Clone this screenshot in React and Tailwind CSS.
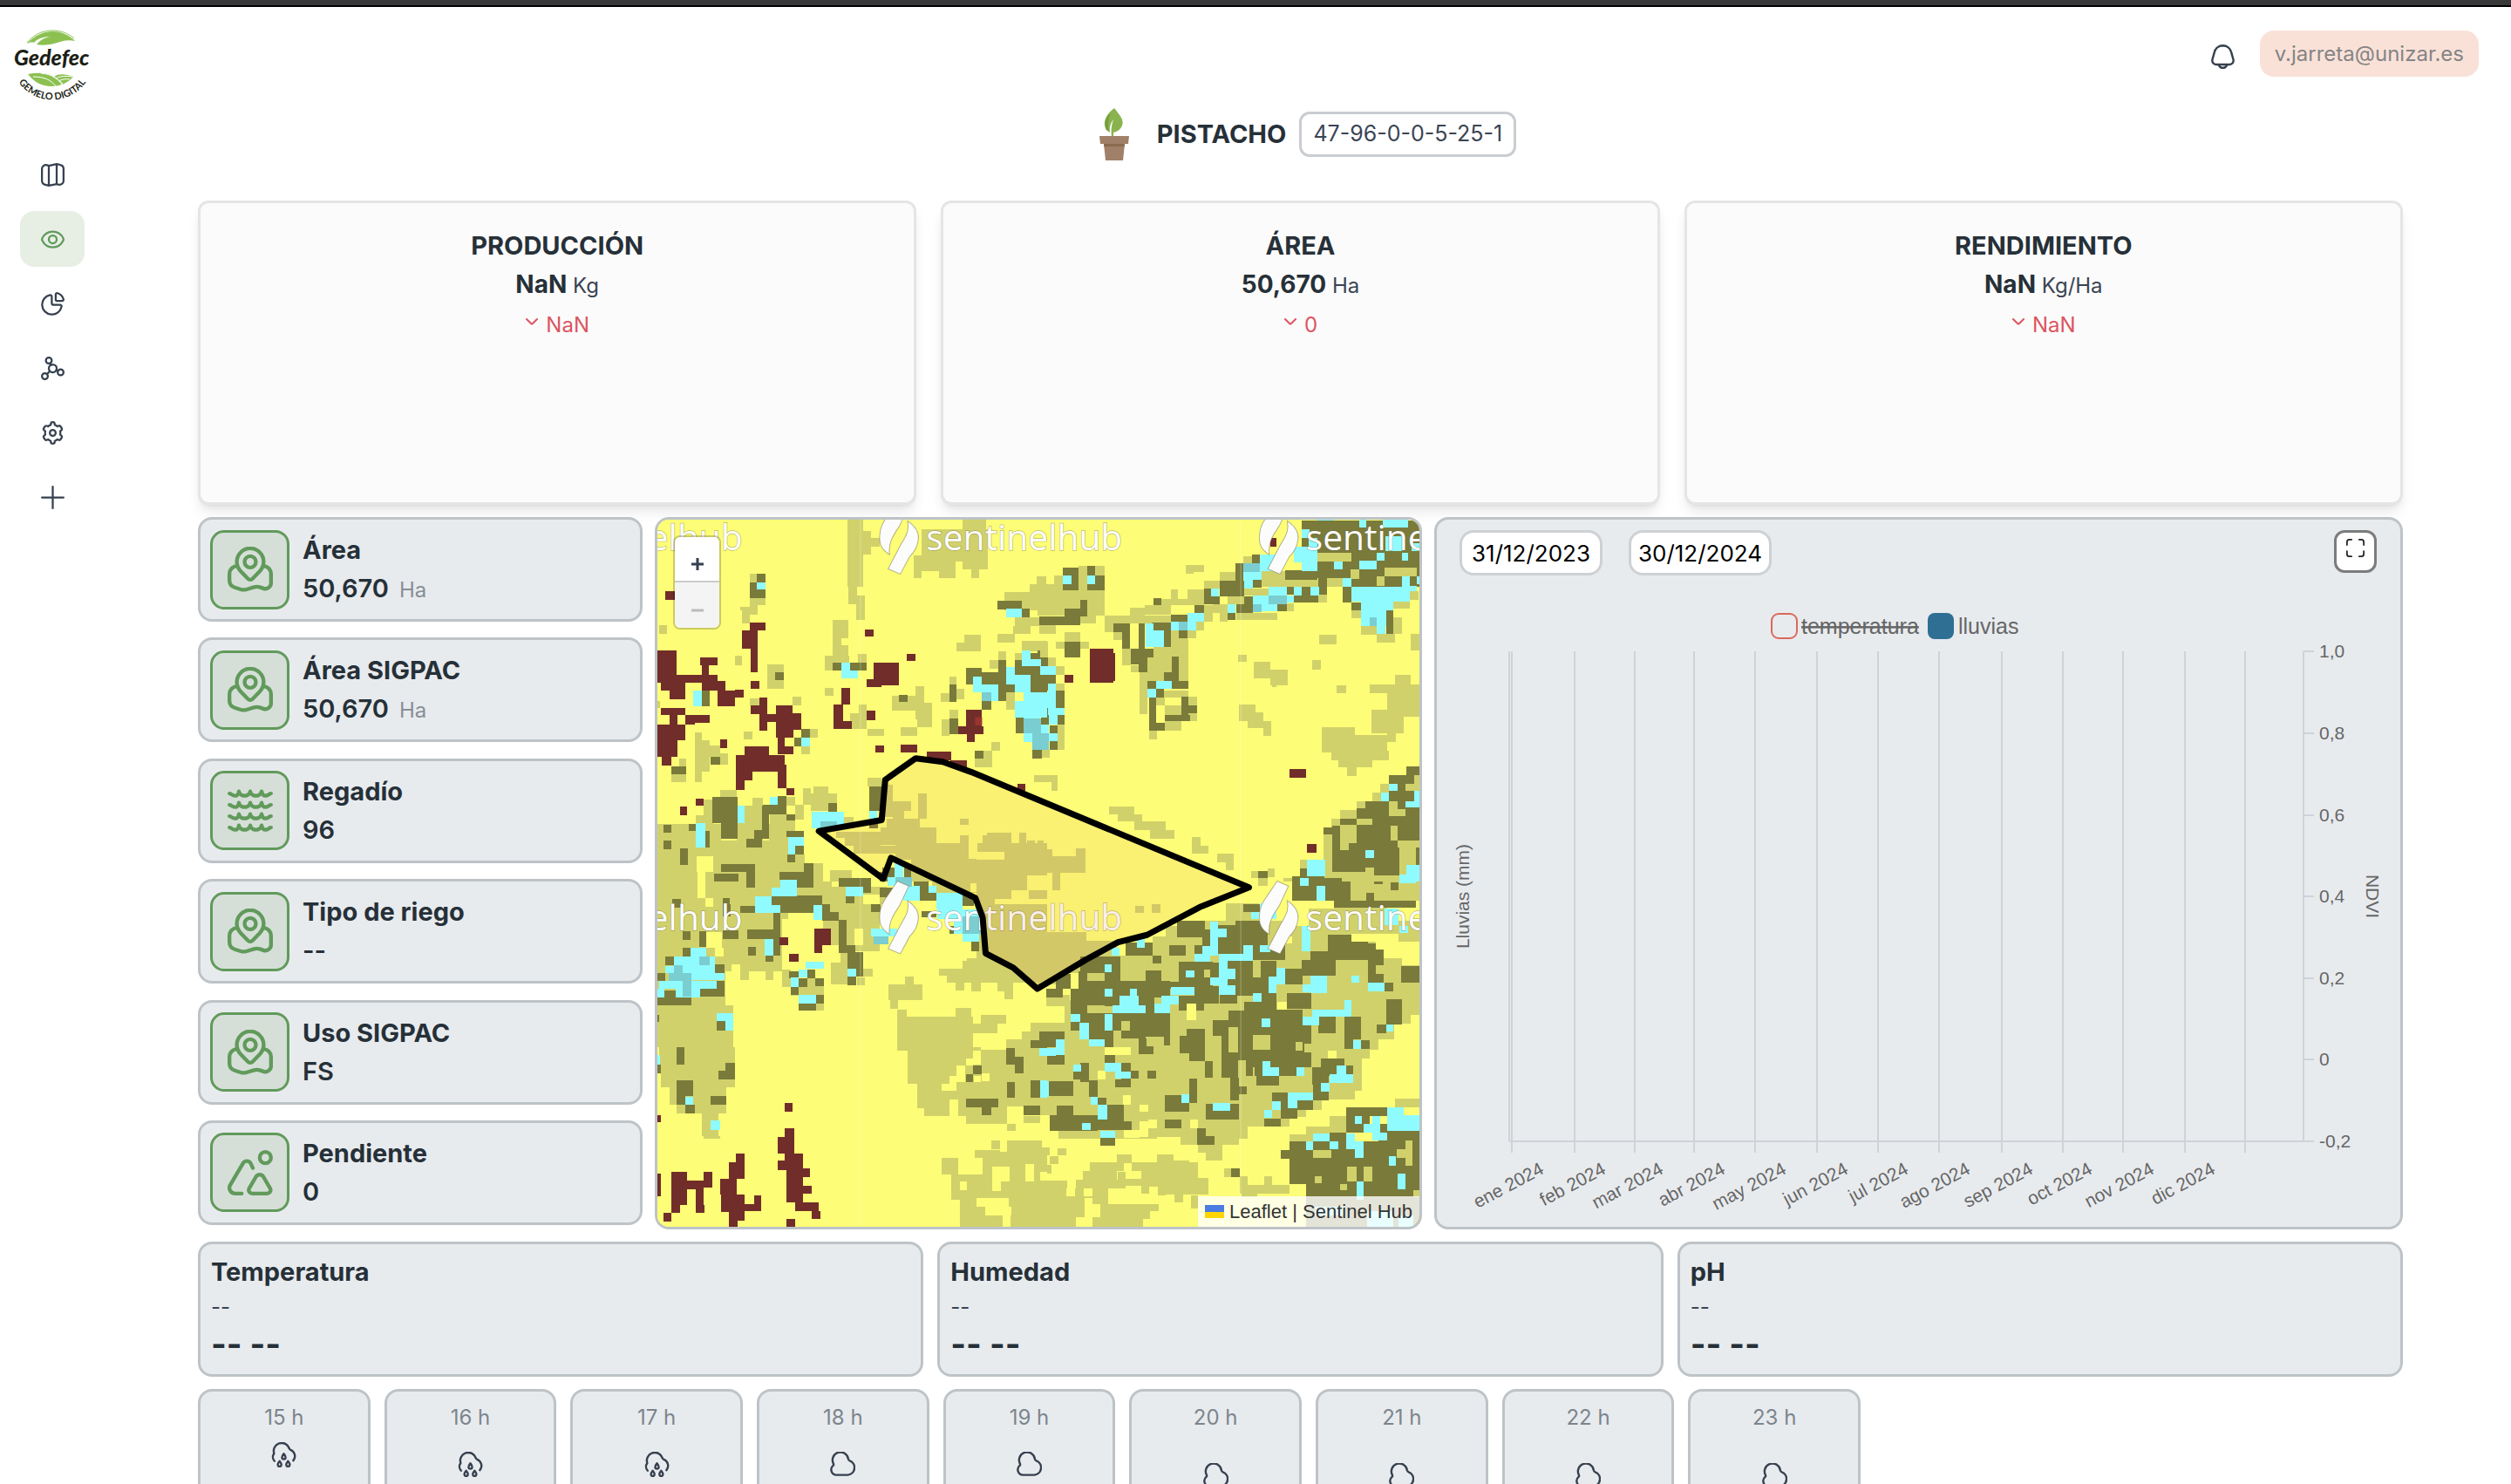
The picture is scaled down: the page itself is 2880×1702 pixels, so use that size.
import React from "react";

/* ---------- land cover raster: "x1,y1,x2,y2" blocks per quadrant ---------- */

const QUADRANTS = [
  {
    dx: 0,
    dy: 0,
    light: `665,18,718,250 718,57,747,138 747,80,775,110 668,250,697,308 695,280,725,362 330,204,354,235 330,288,384,312 330,312,358,345 297,318,330,330 303,330,330,374
18,382,46,410 278,486,302,518 389,514,446,600 614,363,668,425 614,425,644,510 644,450,668,510 586,484,672,508 586,484,614,537 702,478,732,508 586,595,617,624
894,140,1037,195 980,195,1037,219 894,195,920,219 920,52,1148,163 1060,18,1142,52 1062,163,1148,188 1092,188,1119,219
1317,213,1347,240 1293,240,1350,267 1206,267,1350,330 1240,355,1350,384 1236,384,1295,410 1180,412,1242,441 1068,414,1125,470 1041,441,1068,470 1265,435,1350,470 1320,470,1350,495
1185,470,1212,500 1155,500,1185,530 1240,475,1265,530 1017,558,1041,590 987,615,1017,644 1041,600,1068,634
819,622,930,675 900,590,930,705 905,675,957,732 930,648,957,705 478,625,506,657 330,632,362,657 674,682,732,738 705,652,732,682 735,738,792,762 849,732,905,762
1017,672,1047,700 990,704,1017,760 1212,610,1242,670 140,748,165,920 165,776,192,885 192,795,228,832 228,820,256,860 308,745,338,774 12,640,22,665 60,890,112,920 88,838,112,865 506,798,537,824 537,738,563,768
1160,783,1190,812 1104,840,1162,868 1134,812,1162,840 1307,897,1350,920 512,942,540,998 548,936,598,970 540,960,628,1020 735,906,783,936
228,948,285,975 12,1065,230,1260 230,1120,460,1260 460,1168,517,1260 145,1035,205,1065 170,980,200,1065 285,1000,340,1120 340,975,375,1120 400,1030,485,1260 455,970,485,1000 485,998,515,1050 395,1065,460,1200
548,1200,580,1260 605,1224,680,1260 652,1040,687,1080
785,930,822,1040 822,987,885,1020 822,1015,860,1045 908,960,937,1045 800,1045,915,1075 780,1075,972,1135 625,1090,780,1112 655,1110,780,1140 685,1140,830,1165 830,1130,1082,1188 885,1185,1110,1260 1052,1102,1082,1160 1052,1045,1082,1068 1082,1186,1350,1260 1112,1130,1350,1160 1130,1102,1200,1130 1145,1095,1230,1130 1255,1095,1280,1130 1282,1120,1310,1160 1205,1160,1350,1188`,
    dark: `354,204,384,235 330,235,358,288 358,258,384,288 1180,298,1265,328 1265,325,1293,353 1180,320,1212,328 1323,353,1350,382
418,543,446,570 165,606,192,660 614,508,644,536 674,508,732,536 843,620,873,645 1074,528,1128,558 1074,558,1098,585 1128,543,1212,585 1185,500,1212,640 1242,500,1265,552 1265,520,1350,552 1295,475,1323,498 1265,500,1330,525 1212,585,1242,610 1295,552,1350,610 1323,610,1350,640 1330,665,1350,722 1128,640,1160,672 1017,585,1041,644 1017,702,1047,756 1245,697,1272,752 1104,812,1134,840 1302,810,1332,840
506,738,537,768 483,768,506,798 195,832,228,860 60,865,112,892 740,936,795,1020 740,1065,770,1078 200,972,287,1060 230,1060,287,1115 375,998,455,1030 425,968,455,1030 372,1000,397,1115 345,1085,397,1115 318,1115,372,1145 33,1067,60,1095 120,1065,143,1088 33,1122,60,1150 90,1148,118,1205 175,1088,192,1145 455,1088,515,1110 485,1140,515,1168 460,1168,485,1197 455,1030,485,1052 600,993,628,1022 230,1203,347,1230 206,1235,292,1260 318,1203,347,1260 515,1198,548,1230 490,1228,548,1260 433,1228,520,1254 635,1248,690,1260 785,1215,830,1250 860,1215,885,1250`,
    cyan: `354,235,384,258 1212,325,1265,353 134,606,165,660 644,508,674,563 674,536,702,563 506,768,537,798 398,972,425,998 287,1002,311,1060 143,1060,176,1145 462,1110,515,1140 462,1140,485,1170 543,1022,652,1078 740,1018,768,1045 828,1195,858,1250 803,1245,830,1260 435,1254,490,1260
1265,468,1295,520 1295,498,1330,520 1330,525,1350,552 1212,525,1242,585 1242,552,1295,610 1098,558,1128,612 1128,585,1185,640 1272,610,1323,700 1242,640,1350,697 1323,640,1350,665 1272,752,1302,782 1330,722,1350,755`,
    teal: `1128,612,1160,640 1272,700,1330,752 1302,752,1350,810 572,1055,628,1078 830,1245,885,1260`,
    maroon: `40,264,72,293 330,372,384,398 302,398,358,462 333,462,358,543 333,573,362,600 12,468,77,578 24,578,108,606 54,606,108,635 77,550,165,578 158,492,220,518 165,518,190,550 165,550,220,606 220,573,245,606 220,606,280,660 280,602,308,630
24,665,108,690 54,690,82,722 108,690,193,717 108,700,140,722 12,722,108,776 12,776,82,833 26,833,60,862 228,774,252,803 362,630,390,743 333,657,362,685 390,685,420,712 420,657,476,752 476,682,506,740 420,740,480,768 425,752,450,824 450,798,480,824 311,798,395,830 281,828,450,885 281,885,338,914 281,914,311,946 425,860,455,942 455,942,482,966
143,978,170,1002 90,1005,114,1035 725,396,755,420 755,508,843,588 732,565,783,593 870,478,900,502 644,595,674,653 617,652,650,738 650,710,680,738 732,675,761,707 761,795,792,818 849,790,905,819 937,814,1023,845 1020,845,1077,870 1074,672,1128,756 1047,727,1134,756 1077,756,1104,783 1251,925,1277,950`,
    lightOver: ``,
    yellowOver: `148,1176,205,1230 150,1230,178,1260`,
  },
  {
    dx: 1320,
    dy: 0,
    light: `0,213,24,240 24,240,228,348 54,210,84,240 140,178,170,295 195,178,228,348 0,240,24,348 3,382,60,410 60,436,90,460 90,405,144,436 144,436,176,462 0,436,33,492 33,492,62,520 62,522,90,550 62,580,92,606 145,345,200,375
508,174,570,198 508,174,535,203 456,258,482,290 425,290,570,312 513,258,570,290 367,312,456,345 315,320,367,375 230,348,460,375 230,370,258,404 258,404,290,430 288,462,318,518 318,518,348,543 348,543,375,686 375,487,461,573 398,455,461,487 456,400,513,487 485,428,518,573 513,400,543,426 543,370,570,398 570,340,600,368 625,340,653,368 570,228,625,255 625,198,680,228 570,312,653,340 600,308,655,340 653,282,683,310 705,145,737,168 683,282,710,310 682,340,822,362 850,305,880,332 710,255,792,280 765,195,850,240 765,225,963,250 963,275,993,303 993,220,1047,248
1277,265,1308,295 1222,298,1277,325 1222,355,1250,410 1163,410,1226,440 1110,385,1163,414 1077,330,1110,358 1281,412,1311,468 967,414,1026,446 687,483,717,507 741,507,798,562 798,534,858,588 805,585,820,594 942,500,972,534 1026,588,1059,614 1228,552,1281,585 1140,585,1311,614 1200,614,1311,695 1146,672,1257,752 975,732,1089,818 1089,758,1200,812 1008,812,1206,845 1032,845,1149,870 1062,870,1095,900 1200,752,1230,783
690,652,747,710 720,680,776,735 776,710,803,762 518,625,548,657 405,605,518,632 405,632,435,657 435,657,492,690 435,710,492,743 381,743,410,774 518,682,548,710 68,720,92,810 12,810,40,835 0,897,68,920 45,920,68,950
243,1003,330,1030 273,1030,358,1056 330,1056,440,1085 384,1085,470,1114 528,1110,558,1165 558,1140,586,1166 615,1167,672,1195 645,1195,672,1222 0,1122,18,1150 0,1150,48,1232 48,1175,162,1232 130,1147,162,1175 48,1232,77,1260 732,1225,757,1248 790,1218,812,1245 843,1248,873,1260 900,1188,925,1218 980,1100,1012,1240 1176,927,1206,955 1149,957,1180,985 1095,987,1125,1015 1038,1015,1095,1045 1008,1045,1038,1075`,
    dark: `84,183,140,260 170,178,195,210 195,210,228,260 170,238,228,260 144,295,170,325 90,325,170,350 3,350,144,380 90,436,144,492 0,468,8,500 8,492,33,522 0,552,62,580 10,580,33,606 62,606,92,665 10,665,38,722 62,690,92,722 40,725,68,752 40,778,68,808 0,810,12,838
398,288,425,312 258,375,315,404 290,404,315,462 345,375,367,490 318,462,398,490 318,490,375,516 345,516,375,543 390,372,456,400 432,400,456,455 456,345,513,370 485,398,513,426 537,312,570,338 570,255,600,308 600,282,625,308 625,228,710,282 680,168,705,230 653,340,680,362 683,308,740,338 710,282,740,338 737,225,768,252 737,138,762,168 822,305,855,332 855,250,880,275 907,250,937,303 880,275,963,303 461,487,485,573 432,543,485,573 461,573,518,600 375,573,405,600 405,600,432,630 381,630,405,743 405,717,435,743 435,688,522,710 492,625,518,710 518,657,548,682
907,20,1311,130 937,130,1311,220 850,193,960,225 1077,220,1311,248 963,220,993,275 1047,245,1077,303 1077,303,1110,330 1198,330,1222,410
1266,865,1311,925 1206,897,1293,985 1236,925,1311,1010 1125,985,1311,1010 1095,1010,1311,1048 1038,1045,1095,1068 982,1075,1038,1100 1095,1040,1311,1130 1012,1070,1311,1260 757,1225,790,1248 900,1218,930,1248`,
    cyan: `84,210,114,240 170,210,195,240 370,375,398,455 370,400,432,455 456,370,485,398 513,340,570,370 513,370,543,398 595,255,622,282 653,310,680,338 762,138,820,195 705,195,768,225 710,225,738,255 740,280,880,303 740,303,822,332 792,250,855,280 880,250,907,280 937,250,966,278 880,110,960,165 907,160,960,195 907,52,932,80 930,80,960,110 960,18,1017,20 1104,18,1128,45 1185,18,1272,45 1017,162,1047,188 1104,160,1163,188 1163,132,1190,160 1250,132,1272,158 1195,75,1250,125 1284,100,1311,125 1047,220,1077,248 1077,248,1277,300 1250,213,1277,248 1277,245,1302,265 1110,300,1222,330 1110,330,1198,385 1163,385,1195,412 1302,213,1311,240
8,522,62,550 33,580,62,690 0,610,33,665 38,665,92,690 38,690,68,722 8,722,38,752 38,752,68,778 0,500,8,522 405,573,461,600 375,600,405,630
1206,927,1236,950 1180,957,1206,985 1263,985,1311,1008 1293,950,1311,1008 1125,1155,1155,1182 925,1188,987,1242 900,1248,930,1260 1266,1206,1311,1260 1242,1240,1266,1260`,
    teal: `485,370,513,398 705,168,762,198 792,280,855,308 740,310,768,335 1140,355,1163,385 0,752,38,810`,
    maroon: `177,462,258,578 177,475,264,573 90,550,120,578 798,82,820,110 864,876,921,906 925,1132,957,1162`,
    lightOver: `960,132,1077,162 1074,188,1105,222 1163,213,1190,245 1190,183,1302,213 1095,1045,1149,1068 1038,1068,1095,1130 1038,1130,1068,1155 1206,985,1236,1038 1236,1012,1262,1038 1263,925,1311,950 1293,897,1311,925 1212,1070,1236,1120 1236,1120,1311,1145 1242,1145,1300,1205 1242,1205,1266,1240 1125,1213,1155,1260 1155,1240,1242,1260 1043,1245,1125,1260`,
    yellowOver: `435,630,492,657 456,315,513,345 405,657,435,690`,
  },
  {
    dx: 0,
    dy: 1230,
    light: `12,30,440,340 12,340,245,458 12,458,272,600 18,600,278,680 24,680,278,740 54,715,250,800 78,800,250,827 165,827,222,905 170,905,228,915 297,340,328,370 384,340,410,370 440,30,610,160 440,335,470,393 470,393,500,425 500,365,584,475 607,310,640,385 640,270,668,385 580,110,775,250 610,50,745,140 690,250,775,272 700,332,752,357 697,360,725,387 745,50,800,110
1062,305,1150,330 981,330,1175,355 1008,355,1205,380 1038,380,1068,405 1092,380,1125,410 1180,380,1235,408 1206,408,1235,435 1077,295,1119,305 863,358,893,385 807,385,924,438 813,438,838,470 837,472,870,612 870,497,1098,612 1038,465,1092,500 843,600,1125,612 873,612,1098,640 873,640,1040,700 873,700,1017,728 905,728,988,810 988,750,1040,782 930,782,1017,838 1098,520,1180,552 1125,490,1212,520 1040,640,1074,665
1125,610,1350,720 1098,660,1130,700 1070,665,1100,720 1040,720,1350,780 1047,780,1215,838 1074,838,1215,865 1215,780,1350,805 1212,575,1350,610 1266,548,1350,580 1296,517,1350,550 1215,863,1245,888 1272,838,1328,860
990,982,1047,1038 1023,1038,1350,1125 1130,960,1350,1040 1104,953,1190,982 1160,922,1190,950 1215,922,1332,960 1052,1125,1350,1217 1110,30,1350,380 955,0,1230,70`,
    dark: `206,4,292,30 318,0,347,52 433,0,520,24 490,10,548,52 404,80,578,112 432,112,550,138 410,138,435,285 322,195,410,228 297,115,347,140 237,88,262,115 237,200,292,228 98,202,125,232 155,202,180,255 98,258,125,290 40,288,68,320 325,255,352,285 384,285,410,308 62,92,92,120 236,110,265,150 578,108,605,165 605,135,635,165 635,163,663,250 635,250,693,278 666,275,718,357 666,357,695,387 635,20,660,48 660,18,747,48 718,48,745,70 660,82,690,105 745,108,778,135 775,52,825,85 775,0,803,30 893,30,945,98 920,133,970,155 945,70,975,98 1060,75,1100,115 1090,238,1119,270 1015,185,1035,210
210,315,242,345 158,400,242,428 12,430,130,458 36,405,75,430 12,345,40,373 215,373,242,400 215,512,245,543 12,490,18,515 78,600,104,660 12,660,24,690 245,655,278,712 222,682,278,712 78,715,134,768 78,768,108,800 108,800,140,828 195,768,250,798 465,340,497,365 527,335,553,365 497,365,527,395 553,365,584,390 470,393,497,420 555,420,584,450 498,450,557,475
1323,548,1350,578 1296,578,1350,603 1212,603,1242,660 1242,635,1272,690 1098,665,1128,695 1074,695,1098,720 1215,720,1242,776 1296,715,1328,776 1074,778,1185,808 1128,808,1160,833 1272,802,1328,835`,
    cyan: `435,24,492,82 404,52,435,82 347,82,404,138 404,112,435,140 548,112,578,163 660,48,718,82 381,228,410,285 522,308,584,332 497,335,527,362 470,362,497,393 666,332,695,357 497,420,557,450 125,258,180,290 68,288,210,370 40,322,100,345 18,373,215,400 12,400,36,430 75,400,158,430 210,345,242,370 215,485,272,512 245,512,272,543 12,628,22,660 108,772,134,800 195,852,228,885 828,0,858,20 803,15,830,45 858,45,915,98 945,45,972,70 972,70,1060,128 975,128,1115,160 1030,150,1115,210 1060,210,1119,238 747,192,835,220 1323,603,1350,632 1328,715,1350,775`,
    teal: `830,15,887,50 755,220,806,248 155,290,192,318 68,318,98,345 50,345,128,372 98,370,128,428 1062,150,1123,210`,
    maroon: `550,192,608,250 550,250,578,278 433,222,463,250 465,280,497,308 450,792,476,822 450,880,482,912 425,910,482,966 450,966,512,990 425,990,512,1022 455,1022,512,1135 512,1018,537,1046 512,1077,543,1104 485,1135,543,1163 543,1135,567,1163 543,1163,572,1190 455,1192,485,1217 281,967,311,1053 257,996,311,1053 228,1053,285,1108 230,1108,311,1168 311,1140,368,1163 345,1110,368,1163 257,1168,311,1197 257,1197,287,1217 60,1028,113,1142 113,1060,170,1088 170,1028,200,1083 60,1142,90,1170 143,1088,170,1142 143,1142,175,1170 33,1170,60,1200 12,1035,25,1112 12,835,25,858`,
    lightOver: ``,
    yellowOver: `150,30,178,88 178,88,205,118 180,205,235,258 210,258,240,290 268,315,297,345 463,138,548,165 440,165,550,222 463,222,550,280 497,250,550,308 578,250,608,310 584,308,608,335 440,308,520,335 440,250,463,335 718,75,775,108 690,192,718,250 1163,1010,1222,1063 1163,1063,1192,1095 1278,1003,1308,1063 1052,1063,1077,1092 1110,1120,1220,1150 1138,1150,1230,1180 1200,1180,1227,1217 1328,1028,1350,1060 1128,690,1155,718 1282,10,1350,60 1230,60,1290,90 1172,90,1350,110 1088,38,1110,66`,
  },
  {
    dx: 1320,
    dy: 1230,
    light: `48,30,77,60 0,205,165,260 0,235,270,300 0,290,180,345 0,340,100,385 333,115,365,140 390,110,420,140
27,420,110,460 180,285,1311,440 395,220,1311,300 440,185,1311,230 480,165,1311,200 645,105,760,165 90,440,1280,520 1280,320,1311,490 0,517,1225,575 0,575,1170,610 0,605,1140,640 0,640,1113,750 0,750,1090,780 0,780,975,815 8,810,920,840 40,840,865,872 70,870,720,915 490,905,690,935 550,935,635,962 578,960,635,990
1074,10,1311,98 930,100,1200,200 757,0,790,20 735,0,760,18 757,20,790,45
865,900,945,925 920,873,1060,900 1002,838,1060,875 1228,778,1311,808 865,1040,893,1070 893,1055,920,1070
12,1005,45,1035 45,1060,100,1090 0,1060,45,1217 45,1090,160,1217 40,975,70,1003 68,947,98,972 12,945,40,972 155,1025,270,1055 178,997,296,1025 270,968,323,1000 323,995,550,1025 355,1020,550,1050 410,968,467,995 467,990,520,1020 130,1055,275,1085 355,1050,585,1080 440,1080,585,1108 470,1108,500,1135 527,1110,550,1155 187,1085,242,1140 215,1140,415,1165 242,1160,385,1190 187,1165,360,1217 100,1085,242,1120
640,1018,665,1048 695,1045,722,1075 695,1075,865,1103 778,1043,805,1075 700,1100,755,1115 275,1030,300,1085 300,1052,356,1078 355,1080,383,1105 411,1063,440,1110`,
    dark: `873,12,1074,98 985,15,1074,98 1017,98,1300,122 1213,35,1240,62 1155,0,1185,40 1128,70,1155,98 757,0,790,18
478,165,575,222 565,195,592,250 537,250,592,280 620,180,760,280 680,165,790,250 705,108,765,135 735,250,850,300 850,330,910,385 907,300,1022,355 936,270,995,330 995,213,1133,300 1133,245,1187,318 1133,318,1160,382 1160,350,1187,380 1248,323,1311,378 1190,380,1222,408 1197,437,1250,522 1163,522,1197,552 1110,577,1140,608 1053,495,1110,575 1053,575,1083,608 963,497,1022,552 450,250,507,285 395,285,425,312 300,240,395,285
145,290,282,345 60,350,112,400 27,400,85,430 140,340,170,490 112,400,230,490 140,372,250,400 228,345,282,460 282,372,455,430 370,338,425,375 340,430,400,458 370,455,455,565 230,485,370,545 425,375,512,400 483,308,600,395 512,310,625,365 538,390,623,450 483,425,570,475 650,280,740,420 625,420,685,450 765,305,820,360 680,390,740,425 740,360,792,420 710,445,768,510 765,415,820,500 655,475,710,530 600,507,655,562 630,530,687,705 687,500,740,645 715,560,740,700 740,500,940,590 740,585,915,640 820,472,910,510 855,415,940,470 715,620,940,670 745,665,900,700 750,700,828,732 660,705,690,785 690,735,717,762 578,795,690,848 573,650,602,705 520,540,573,648 487,562,573,622 512,537,573,600 520,708,548,793 435,767,520,822 435,850,492,880 548,880,578,935 578,905,608,935 318,683,347,710 375,683,405,710 345,570,372,625 370,597,398,625 287,543,370,570 432,480,455,595
112,515,145,543 145,485,230,575 230,545,258,600 230,628,264,655 287,655,318,740 264,712,318,740 145,655,176,720 120,683,176,712 176,715,206,772 206,775,235,800 235,800,295,880 264,855,323,885 206,850,264,885 213,912,266,940 40,833,205,888 63,802,120,835 3,548,90,600 32,628,90,660 38,717,120,770 0,802,8,833 805,758,858,815 778,845,833,873 833,785,890,845 888,785,945,815 945,700,1000,783 972,640,1053,700 1053,665,1083,695 942,670,1000,730
1060,808,1140,895 1140,808,1170,838 1170,808,1200,838 1170,865,1311,1115 865,925,1311,1070 835,955,865,985 920,1070,1311,1217 1002,895,1060,925 665,1018,695,1048`,
    cyan: `1200,808,1257,860 1200,835,1311,888 1090,838,1113,865 1119,865,1177,895 1148,838,1177,920 1148,895,1200,920 1060,897,1090,950 1090,925,1119,980 945,897,1002,925 920,925,945,955 1002,925,1032,950 1206,975,1230,1008 1236,1035,1263,1090 1095,1063,1119,1125 950,1150,1050,1180 1130,1165,1220,1217 1240,1180,1290,1217
340,230,367,258 252,258,281,287 228,315,252,343 228,400,257,428 315,400,340,430 281,425,345,460 257,458,370,483 400,450,455,483 425,425,483,455 456,395,537,420 507,338,537,362 592,168,620,285 592,192,650,222 565,252,620,285 537,280,592,308 623,280,738,303 623,303,652,420 592,362,650,388 652,332,680,368 652,388,680,420 705,250,738,303 732,135,760,160 762,250,800,273 738,415,768,445 820,328,850,385 792,358,820,415 936,355,993,415 910,385,993,412 1077,355,1104,378 1133,380,1190,408 1053,440,1077,495 942,473,1077,497 910,497,965,525 768,503,798,532 1197,522,1222,547 1083,577,1110,608 772,648,798,700 798,670,828,700 887,670,915,700 1026,665,1060,697 1002,695,1083,725 972,725,1002,755 858,758,945,785 858,785,890,812 805,788,833,815 778,815,805,843 602,793,660,820 492,763,520,793
112,487,145,515 143,517,176,573 176,573,230,597 230,487,257,543 60,573,90,628 3,605,60,630 120,660,148,685 230,655,287,685 264,685,318,710 8,717,38,773 180,773,206,798 206,798,237,850 150,860,180,885 213,887,266,912 930,0,987,12 900,18,930,45 957,45,987,98 1243,8,1300,38 907,185,936,272 1190,125,1240,180 1242,185,1272,208 762,105,820,160`,
    teal: ``,
    maroon: ``,
    lightOver: `170,345,228,372 170,458,228,485 287,512,315,543 655,532,687,618 687,648,715,700 740,560,798,610 885,583,910,612 740,562,770,588 945,955,1008,980 1062,1010,1095,1063 1119,1010,1149,1063 1038,1070,1062,1092 1233,950,1263,980 1263,920,1287,1008 950,1043,975,1068 1290,1092,1311,1115 375,568,432,597 570,335,592,362 985,0,1155,18`,
    yellowOver: `295,885,350,912 350,855,380,908 380,850,410,880 410,908,490,935 522,850,550,880 292,765,318,798 348,798,380,822 230,600,318,628 206,683,232,712 512,452,543,508 822,445,855,472 996,612,1026,640 8,835,40,888 850,120,930,185 870,98,1017,125 1077,210,1160,238 1160,210,1240,265 1187,238,1311,295 1250,295,1311,320 850,220,873,245 98,1087,128,1112 157,1085,187,1112 160,1140,215,1185 130,1185,187,1217`,
  },
];

const COLORS = {
  yellow: "#fdfd77",
  light: "#d1d16b",
  dark: "#7a7a3a",
  cyan: "#8ffbff",
  teal: "#7acdd0",
  maroon: "#712d2a",
};

const blocks = (list) =>
  list
    .trim()
    .split(/\s+/)
    .filter(Boolean)
    .map((b) => {
      const [x1, y1, x2, y2] = b.split(",");
      return `M${x1} ${y1}H${x2}V${y2}H${x1}z`;
    })
    .join("");

const LAYERS = [
  ["light", "light"],
  ["dark", "dark"],
  ["lightOver", "light"],
  ["yellowOver", "yellow"],
  ["cyan", "cyan"],
  ["teal", "teal"],
  ["maroon", "maroon"],
];

function Watermark({ x, y }) {
  return (
    <g transform={`translate(${x} ${y})`}>
      <g stroke="#6b6b4a" strokeOpacity="0.5" strokeWidth="3" fill="#fcfcfc">
        <path d="M62-170 101-153 69-85C45-50 30-25 35 13 5-5 0-25 1-50 2-85 15-100 29-121Z" />
        <path d="M97-103C130-80 136-60 134-40 130-10 115 10 104 20L72 80 30 62 74-22C98-60 102-75 97-103Z" />
      </g>
      <text
        x="161"
        y="-2"
        fontSize="122"
        fontWeight="500"
        fill="#fcfcfc"
        stroke="#6b6b4a"
        strokeOpacity="0.45"
        strokeWidth="4"
        paintOrder="stroke"
        fontFamily="'Open Sans', sans-serif"
      >
        sentinelhub
      </text>
    </g>
  );
}

function LandMap() {
  return (
    <section className="relative overflow-hidden rounded-2xl border-3 border-[#bdc3c7] bg-[#fdfd77]">
      <svg
        viewBox="12 18 2619 2430"
        preserveAspectRatio="xMidYMid slice"
        className="absolute inset-0 size-full"
        role="img"
        aria-label="Mapa de la parcela"
      >
        <rect width="2700" height="2500" fill={COLORS.yellow} />
        {LAYERS.map(([layer, color]) => (
          <g key={layer} fill={COLORS[color]} shapeRendering="crispEdges">
            {QUADRANTS.map((q) => (
              <path key={`${q.dx}-${q.dy}`} transform={`translate(${q.dx} ${q.dy})`} d={blocks(q[layer])} />
            ))}
          </g>
        ))}
        <path d="M1104 697h24v28h-24z" fill="#983530" />
        <path d="M710 18V2448M2017 18V2448" stroke="#fff" strokeOpacity="0.3" strokeWidth="3" />
        {[-530, 775, 2080].map((x) => (
          <React.Fragment key={x}>
            <Watermark x={x} y={125} />
            <Watermark x={x} y={1430} />
          </React.Fragment>
        ))}
        <path
          d="M900 838 993 850 1090 885 2045 1282 1875 1350 1695 1445 1595 1470 1485 1530 1318 1630 1235 1558 1140 1508 1130 1385 1105 1318 815 1180 788 1252 567 1088 783 1050 795 912Z"
          fill="#e08448"
          fillOpacity="0.1"
          stroke="#000"
          strokeWidth="21"
          strokeLinejoin="round"
        />
      </svg>
      <div className="absolute top-[18px] left-[18px] flex flex-col overflow-hidden rounded-lg border-2 border-black/20 bg-clip-padding">
        <button className="flex h-[52px] w-[51px] items-center justify-center border-b-2 border-[#ccc] bg-white pt-3 text-[#34404f]" aria-label="Acercar">
          <svg width="16" height="16" viewBox="0 0 16 16" stroke="currentColor" strokeWidth="3" fill="none">
            <path d="M8 1v14M1 8h14" />
          </svg>
        </button>
        <button className="flex h-[52px] w-[51px] items-center justify-center bg-[#f4f4f4] pt-3 text-[#bbb]" aria-label="Alejar">
          <svg width="16" height="16" viewBox="0 0 16 16" stroke="currentColor" strokeWidth="3" fill="none">
            <path d="M1 8h14" />
          </svg>
        </button>
      </div>
      <div className="absolute right-0 bottom-0 flex h-[35px] items-center gap-[6px] bg-white/80 px-2 font-['Liberation_Sans',sans-serif] text-[22px] text-[#333]">
        <svg width="22" height="15" viewBox="0 0 22 15">
          <path fill="#4c7be1" d="M0 0h22v8H0z" />
          <path fill="#ffd500" d="M0 8h22v7H0z" />
        </svg>
        <span>
          <a href="#leaflet">Leaflet</a> | <a href="#sentinel">Sentinel Hub</a>
        </span>
      </div>
    </section>
  );
}

/* ------------------------------- icons ------------------------------- */

function Icon({ size = 27, stroke = 2, children }) {
  return (
    <svg
      width={size}
      height={size}
      viewBox="0 0 24 24"
      fill="none"
      stroke="currentColor"
      strokeWidth={stroke}
      strokeLinecap="round"
      strokeLinejoin="round"
      aria-hidden="true"
    >
      {children}
    </svg>
  );
}

const MapFold = () => (
  <Icon stroke={2}>
    <path d="M8 2.8 16 1l3.6.8A4.2 4.2 0 0 1 23 6v12.200a4 4 0 0 1-5 3.800l-2-.6L8 23l-3.600-.9A4.200 4.200 0 0 1 1 18V5.800A4 4 0 0 1 6 2.100zM8 2.800V23M16 1v20.400" />
  </Icon>
);
const Eye = () => (
  <Icon stroke={2}>
    <path d="M1.500 10.500C3 7.500 6.500 4 12 4s9 3.500 10.500 6.500a3 3 0 0 1 0 3C21 16.500 17.500 20 12 20s-9-3.500-10.500-6.500a3 3 0 0 1 0-3z" />
    <circle cx="12" cy="12" r="4" />
  </Icon>
);
const Pie = () => (
  <Icon stroke={2}>
    <path d="M11 4.500A1.500 1.500 0 0 0 9.300 3 10 10 0 1 0 21 14.700 1.500 1.500 0 0 0 19.500 13H13a2 2 0 0 1-2-2z" />
    <path d="M15 3v4.500A1.500 1.500 0 0 0 16.500 9H21.500a1.400 1.400 0 0 0 1.400-1.800A9 9 0 0 0 17 1.100 1.600 1.600 0 0 0 15 3z" />
  </Icon>
);
const Network = () => (
  <Icon stroke={2}>
    <circle cx="12" cy="12" r="4" />
    <circle cx="8" cy="4" r="3" />
    <circle cx="4" cy="20" r="3" />
    <circle cx="20" cy="16" r="3" />
    <path d="m9.300 6.800 1 1.800M6.200 17.800l2.800-2.900M15.700 13.700l1.600.9" />
  </Icon>
);
const Gear = () => (
  <Icon stroke={2}>
    <circle cx="12" cy="12" r="3" />
    <path d="M14 3a2 2 0 0 0-4 0v.8A8.400 8.400 0 0 0 7.200 5.400l-.7-.4a2 2 0 0 0-2 0 2 2 0 0 0-.7.700L3 7a2 2 0 0 0 .7 2.700l.7.400a8.600 8.600 0 0 0 0 3.800l-.7.400A2 2 0 0 0 3 17l.8 1.300a2 2 0 0 0 2.700.7l.7-.4A8.400 8.400 0 0 0 10 20.200v.8a2 2 0 0 0 4 0v-.8a8.400 8.400 0 0 0 2.800-1.600l.7.400a2 2 0 0 0 2.700-.7L21 17a2 2 0 0 0-.7-2.700l-.7-.4a8.600 8.600 0 0 0 0-3.800l.7-.4A2 2 0 0 0 21 7l-.8-1.300a2 2 0 0 0-2.700-.7l-.7.400A8.400 8.400 0 0 0 14 3.800z" />
  </Icon>
);
const Plus = () => (
  <Icon stroke={2}>
    <path d="M12 1v22M1 12h22" />
  </Icon>
);
const Bell = () => (
  <Icon size={29}>
    <path d="M12 1a8.300 8.300 0 0 0-8 6.300L2 14.500A3.700 3.700 0 0 0 5.600 19h12.800a3.700 3.700 0 0 0 3.600-4.500L20 7.300A8.300 8.300 0 0 0 12 1z" />
    <path d="M8.200 19.500a4 4 0 0 0 7.600 0" />
  </Icon>
);
const PinMap = () => (
  <Icon size={52}>
    <path d="M12 17.500c-.5 0-.9-.2-1.200-.5L7 13A7.400 7.400 0 0 1 4.900 8 7.100 7.100 0 0 1 19.100 8a7.400 7.400 0 0 1-2.100 5l-3.800 4c-.3.300-.7.500-1.200.5z" />
    <circle cx="12" cy="8" r="3" />
    <path d="M4.700 10.200A4.200 4.200 0 0 0 1 14.300v3.500a4 4 0 0 0 2.800 3.800l3.200 1c1 .3 2 .3 3 0l4-1.200c1-.3 2-.3 3 0l2 .7a3 3 0 0 0 4-2.800v-5a4.200 4.200 0 0 0-3.700-4.100" />
  </Icon>
);
const Waves = () => (
  <Icon size={52}>
    {[2, 8, 14, 20].map((y) => (
      <path key={y} transform={`translate(0 ${y})`} d="M1 .8C2 .8 2.300 2 4 2S6-.3 6-.3 6.500 2 9 2s3-2.300 3-2.300S12.500 2 15 2s3-2.300 3-2.300S18.500 2 20 2s2-1.200 3-1.200" />
    ))}
  </Icon>
);
const Slope = () => (
  <Icon size={52}>
    <circle cx="20" cy="4" r="3" />
    <path d="M7.500 23H4a3 3 0 0 1-2.600-4.500L8.200 7a2.300 2.300 0 0 1 4 0l1.200 2.500" />
    <path d="m15 14.200-3.600 6.200A1.800 1.800 0 0 0 13 23h8a1.800 1.800 0 0 0 1.600-2.600L19 14.200a2.300 2.300 0 0 0-4 0z" />
  </Icon>
);
const Cloud = () => (
  <Icon size={29}>
    <path d="M17 22H6A5 5 0 0 1 2.900 13.200Q3.700 12.500 3.300 11.500A7.500 7.500 0 1 1 17.300 6.800Q17.600 8 18.700 8.500A7 7 0 0 1 17 22z" />
  </Icon>
);
const Rain = () => (
  <Icon size={29}>
    <path d="M3.200 18A5.500 5.500 0 0 1 2.800 10.800 7.500 7.500 0 1 1 17.200 6Q17.500 7 18.500 7.300A6.500 6.500 0 0 1 21 17.500" />
    <path d="M12 11s-1.700 2.200-1.700 3.400a1.700 1.700 0 0 0 3.400 0c0-1.200-1.700-3.400-1.700-3.400zM8 18s-1.700 2.200-1.700 3.400a1.700 1.700 0 0 0 3.400 0C9.700 20.200 8 18 8 18zM16 18s-1.700 2.200-1.700 3.400a1.700 1.700 0 0 0 3.400 0c0-1.200-1.700-3.400-1.700-3.400z" />
  </Icon>
);

function Logo() {
  return (
    <svg width="92" height="80" viewBox="0 0 92 80" className="overflow-visible" aria-label="Gedefec gemelo digital">
      <path d="M17 16C27 5 38 2 46 2c13 0 21 6 26 11-10-2-16 1-24 3-8 2-15 2-20 1 4-5 9-8 16-9-9 0-16 3-19 7-3-1-5 0-8 1z" fill="#8cc152" />
      <path d="M17 15C27 3 38 1 46 1c10 0 18 3 25 9" fill="none" stroke="#8cc152" strokeWidth="1" />
      <text x="2" y="41" fontSize="25" fontWeight="900" fontStyle="italic" fill="#1c1f17" fontFamily="Lato, sans-serif">
        Gedefec
      </text>
      <path d="M18 51C29 49 40 49 48 54 54 50 61 51 70 54 64 61 55 65 45 65 34 65 25 60 18 51z" fill="#8cc152" />
      <path d="M24 54c12 0 20 3 26 11M33 50c12 1 20 6 24 13M47 54c4 2 8 5 11 8M50 56c6-3 11-3 19-2M53 59c4-2 8-3 13-2" fill="none" stroke="#fff" strokeWidth="1" />
      <path id="logo-arc" d="M1 47A47 47 0 0 0 91 47" fill="none" />
      <text fontSize="11" fontWeight="700" fill="#1c1f17" fontFamily="Lato, sans-serif">
        <textPath href="#logo-arc" startOffset="50%" textAnchor="middle">
          GEMELO DIGITAL
        </textPath>
      </text>
    </svg>
  );
}

function Plant() {
  return (
    <svg width="36" height="60" viewBox="0 0 36 60" aria-hidden="true">
      <path d="M18 0C8 8 4 16 9 25l4 3c-1-6 1-11 4-15-2 6-3 12-2 20h2v-5c9-2 12-9 10-15C25 8 21 4 18 0z" fill="#8ab34f" />
      <path d="M14 5C7 12 6 19 9 25l3 2c-2-7-1-14 2-22z" fill="#769e3f" />
      <path d="M1 32h34l-1 9H2z" fill="#a08068" />
      <path d="M6 41h24l-2 19H8z" fill="#a08068" />
      <path d="M6 41h24v3H6z" fill="#8b6b50" />
    </svg>
  );
}

/* ------------------------------ chart ------------------------------ */

const MONTHS = [
  ["ene 2024", 1772],
  ["feb 2024", 1843],
  ["mar 2024", 1909],
  ["abr 2024", 1980],
  ["may 2024", 2050],
  ["jun 2024", 2121],
  ["jul 2024", 2190],
  ["ago 2024", 2261],
  ["sep 2024", 2333],
  ["oct 2024", 2401],
  ["nov 2024", 2472],
  ["dic 2024", 2542],
];
const GRID_X = [1734, 1806, 1875, 1943, 2013, 2084, 2154, 2224, 2296, 2366, 2435, 2506, 2575];
const TICKS = [
  ["1,0", 747],
  ["0,8", 841],
  ["0,6", 935],
  ["0,4", 1028],
  ["0,2", 1122],
  ["0", 1215],
  ["-0,2", 1309],
];

function Chart() {
  return (
    <svg viewBox="1648 690 1105 717" className="w-full font-['Liberation_Sans',sans-serif]" fill="#666" role="img" aria-label="Lluvias y NDVI por mes">
      <rect x="2032" y="704" width="29" height="28" rx="8" fill="none" stroke="#d9695a" strokeWidth="2" />
      <text x="2066" y="727" fontSize="25" textDecoration="line-through">
        temperatura
      </text>
      <rect x="2211" y="703" width="30" height="30" rx="8" fill="#2f6f94" />
      <text x="2246" y="727" fontSize="25">
        lluvias
      </text>
      <g stroke="#cfd3d7" strokeWidth="2">
        <path d="M1731 747V1309M2642 747V1309M1731 1309H2654" />
        {GRID_X.map((x) => (
          <path key={x} d={`M${x} 747V1322`} />
        ))}
        {TICKS.map(([t, y]) => (
          <path key={t} d={`M2642 ${y}h12`} />
        ))}
      </g>
      <g fontSize="21">
        {TICKS.map(([t, y]) => (
          <text key={t} x="2660" y={y + 7}>
            {t}
          </text>
        ))}
        {MONTHS.map(([m, x]) => (
          <text key={m} transform={`translate(${x} 1345) rotate(-28)`} textAnchor="end">
            {m}
          </text>
        ))}
        <text transform="translate(1685 1028) rotate(-90)" textAnchor="middle">
          Lluvias (mm)
        </text>
        <text transform="translate(2714 1028) rotate(90)" textAnchor="middle">
          NDVI
        </text>
      </g>
    </svg>
  );
}

function ChartPanel() {
  return (
    <section className="flex flex-col justify-between rounded-2xl border-3 border-[#bdc3c7] bg-[#e8ebee]">
      <div className="flex items-start justify-between pt-3 pr-[27px] pl-[26px]">
        <div className="flex gap-[30px]">
          {["31/12/2023", "30/12/2024"].map((d, i) => (
            <input
              key={d}
              type="text"
              defaultValue={d}
              aria-label={i ? "Fecha final" : "Fecha inicial"}
              className="h-[52px] w-[164px] rounded-2xl border-3 border-[#cdd1d4] bg-white text-center text-[26px] text-black"
            />
          ))}
        </div>
        <button className="flex size-[49px] items-center justify-center rounded-xl border-3 border-[#7c7c7c] bg-white pb-2 text-[#222]" aria-label="Pantalla completa">
          <Icon size={21}>
            <path d="M1 8V4a3 3 0 0 1 3-3h3M17 1h3a3 3 0 0 1 3 3v4M23 16v4a3 3 0 0 1-3 3h-3M7 23H4a3 3 0 0 1-3-3v-4" />
          </Icon>
        </button>
      </div>
      <Chart />
    </section>
  );
}

/* ------------------------------ page ------------------------------ */

const NAV = [
  ["Mapa", MapFold],
  ["Vista", Eye],
  ["Estadísticas", Pie],
  ["Red", Network],
  ["Ajustes", Gear],
  ["Añadir", Plus],
];
const SUMMARY = [
  ["PRODUCCIÓN", "NaN", "Kg", "NaN"],
  ["ÁREA", "50,670", "Ha", "0"],
  ["RENDIMIENTO", "NaN", "Kg/Ha", "NaN"],
];
const FACTS = [
  ["Área", "50,670", "Ha", PinMap],
  ["Área SIGPAC", "50,670", "Ha", PinMap],
  ["Regadío", "96", "", Waves],
  ["Tipo de riego", "--", "", PinMap],
  ["Uso SIGPAC", "FS", "", PinMap],
  ["Pendiente", "0", "", Slope],
];
const HOURS = [
  ["15 h", Rain, "pt-[10px]"],
  ["16 h", Rain, "pt-[21px]"],
  ["17 h", Rain, "pt-[21px]"],
  ["18 h", Cloud, "pt-[21px]"],
  ["19 h", Cloud, "pt-[21px]"],
  ["20 h", Cloud, "pt-[34px]"],
  ["21 h", Cloud, "pt-[34px]"],
  ["22 h", Cloud, "pt-[34px]"],
  ["23 h", Cloud, "pt-[34px]"],
];

export default function App() {
  return (
    <div className="flex h-screen flex-col overflow-hidden bg-white font-[Inter,sans-serif] text-[#263038]">
      <div className="h-2 shrink-0 border-b-2 border-black bg-[#38383a]" />
      <div className="flex">
        <aside className="flex w-[120px] shrink-0 flex-col items-center pt-[26px]">
          <a href="#inicio">
            <Logo />
          </a>
          <nav className="mt-[54px] flex flex-col gap-[10px]">
            {NAV.map(([label, I]) => (
              <button
                key={label}
                aria-label={label}
                className={
                  label === "Vista"
                    ? "flex h-16 w-[74px] items-center justify-center rounded-2xl bg-[#e7efe5] text-[#60995a]"
                    : "flex h-16 w-[74px] items-center justify-center rounded-2xl text-[#36404f]"
                }
              >
                <I />
              </button>
            ))}
          </nav>
        </aside>

        <main className="min-w-0 flex-1">
          <header className="flex items-center justify-end gap-[28px] pt-[27px] pr-[37px]">
            <button aria-label="Notificaciones" className="pt-2 text-[#36404f]">
              <Bell />
            </button>
            <button className="flex h-[53px] items-center rounded-2xl bg-[#fae1d8] px-[17px] text-2xl text-[#858585]">v.jarreta@unizar.es</button>
          </header>

          <div className="mr-[124px] ml-[107px]">
            <div className="mt-9 flex h-[60px] items-center justify-center pl-4">
              <Plant />
              <h1 className="ml-[31px] text-[29px] font-bold">PISTACHO</h1>
              <span className="ml-[15px] flex h-[52px] items-center rounded-xl border-3 border-[#c9cdd1] px-[13px] text-[25px] text-[#3a4454]">47-96-0-0-5-25-1</span>
            </div>

            <div className="mt-[46px] grid grid-cols-3 gap-7">
              {SUMMARY.map(([title, value, unit, delta]) => (
                <section key={title} className="h-[349px] rounded-xl border-3 border-[#e5e5e5] bg-[#fbfbfb] pt-[26px] text-center leading-[45px] shadow-lg">
                  <h2 className="text-[29px] leading-[45px] font-bold">{title}</h2>
                  <p className="text-2xl leading-[45px] text-[#3a4454]">
                    <b className="text-[28px] text-[#263038]">{value}</b> {unit}
                  </p>
                  <p className="flex items-center justify-center gap-2 text-2xl leading-[45px] text-[#dc5560]">
                    <svg width="16" height="16" viewBox="0 0 16 16" fill="none" stroke="currentColor" strokeWidth="2" strokeLinecap="round" strokeLinejoin="round">
                      <path d="m2 1 5 5q1 1 2 0l5-5" />
                    </svg>
                    {delta}
                  </p>
                </section>
              ))}
            </div>

            <div className="mt-[14px] grid min-h-[817px] grid-cols-[510fr_880fr_1111fr] gap-[14px]">
              <div className="flex flex-col justify-between pb-[5px]">
                {FACTS.map(([title, value, unit, I]) => (
                  <section key={title} className="flex h-[120px] items-center gap-[15px] rounded-2xl border-3 border-[#bdc3c7] bg-[#e8ebee] pl-[11px]">
                    <div className="flex size-[91px] shrink-0 items-center justify-center rounded-2xl border-3 border-[#619a5b] bg-[#d5dfd8] text-[#619a5b]">
                      <I />
                    </div>
                    <div>
                      <h3 className="text-[29px] leading-[44px] font-bold">{title}</h3>
                      <p className="text-[29px] leading-[44px] font-semibold">
                        {value}
                        <span className="ml-3 text-2xl font-normal text-[#868e96]">{unit}</span>
                      </p>
                    </div>
                  </section>
                ))}
              </div>
              <LandMap />
              <ChartPanel />
            </div>

            <div className="mt-[14px] grid grid-cols-3 gap-4">
              {["Temperatura", "Humedad", "pH"].map((t) => (
                <section key={t} className="h-[155px] rounded-2xl border-3 border-[#bdc3c7] bg-[#e8ebee] pt-[10px] pl-3">
                  <h3 className="text-[29px] leading-[44px] font-bold">{t}</h3>
                  <p className="text-2xl leading-9 text-[#3a4454]">--</p>
                  <p className="text-[38px] leading-[48px] font-bold">-- --</p>
                </section>
              ))}
            </div>

            <div className="mt-[14px] grid max-w-[1907px] grid-cols-9 gap-4">
              {HOURS.map(([h, I, pad]) => (
                <section key={h} className="flex h-[200px] flex-col items-center rounded-2xl border-3 border-[#bdc3c7] bg-[#e8ebee] pt-3">
                  <span className="text-2xl leading-9 text-[#7c858d]">{h}</span>
                  <div className={`${pad} text-[#36404f]`}>
                    <I />
                  </div>
                </section>
              ))}
            </div>
          </div>
        </main>
      </div>
    </div>
  );
}
